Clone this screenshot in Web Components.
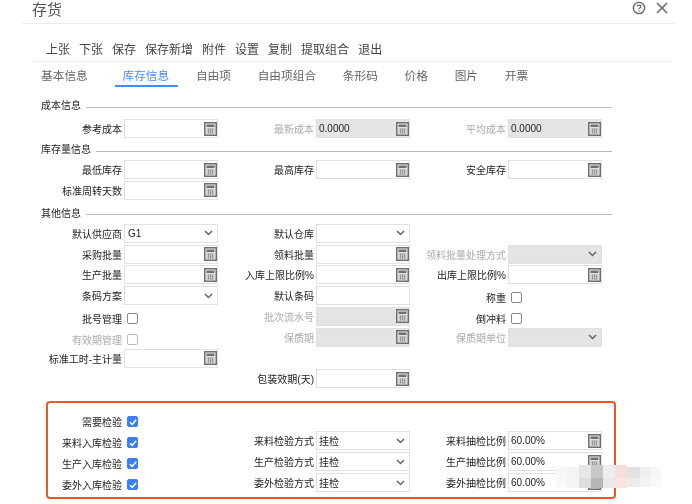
<!DOCTYPE html>
<html lang="zh">
<head>
<meta charset="utf-8">
<title>存货</title>
<style>
  html, body { margin: 0; padding: 0; background: #fff; }
  body { font-family: "Liberation Sans", "Noto Sans CJK SC", sans-serif; color: #333; }
</style>
</head>
<body>
<stock-dialog>
  <dialog-header slot="header" title="存货"></dialog-header>
  <tool-bar slot="toolbar" items="上张,下张,保存,保存新增,附件,设置,复制,提取组合,退出"></tool-bar>
  <tab-bar slot="tabs" items="基本信息,库存信息,自由项,自由项组合,条形码,价格,图片,开票" active="1"></tab-bar>

  <form-section heading="成本信息" style="--top:12px;--gap:6px">
    <form-row>
      <form-field label="参考成本" type="calc"></form-field>
      <form-field label="最新成本" type="calc" value="0.0000" disabled></form-field>
      <form-field label="平均成本" type="calc" value="0.0000" disabled></form-field>
    </form-row>
  </form-section>
  <form-section heading="库存量信息" style="--top:5px;--gap:3px">
    <form-row>
      <form-field label="最低库存" type="calc"></form-field>
      <form-field label="最高库存" type="calc"></form-field>
      <form-field label="安全库存" type="calc"></form-field>
    </form-row>
    <form-row>
      <form-field label="标准周转天数" type="calc"></form-field>
    </form-row>
  </form-section>
  <form-section heading="其他信息" style="--top:7px;--gap:3px">
    <form-row>
      <form-field label="默认供应商" type="select" value="G1"></form-field>
      <form-field label="默认仓库" type="select"></form-field>
    </form-row>
    <form-row>
      <form-field label="采购批量" type="calc"></form-field>
      <form-field label="领料批量" type="calc"></form-field>
      <form-field label="领料批量处理方式" type="select" disabled></form-field>
    </form-row>
    <form-row>
      <form-field label="生产批量" type="calc"></form-field>
      <form-field label="入库上限比例%" type="calc"></form-field>
      <form-field label="出库上限比例%" type="calc"></form-field>
    </form-row>
    <form-row>
      <form-field label="条码方案" type="select"></form-field>
      <form-field label="默认条码" type="text"></form-field>
      <form-field label="称重" type="check"></form-field>
    </form-row>
    <form-row>
      <form-field label="批号管理" type="check"></form-field>
      <form-field label="批次流水号" type="calc" disabled></form-field>
      <form-field label="倒冲料" type="check"></form-field>
    </form-row>
    <form-row>
      <form-field label="有效期管理" type="check" disabled></form-field>
      <form-field label="保质期" type="calc" disabled></form-field>
      <form-field label="保质期单位" type="select" disabled></form-field>
    </form-row>
    <form-row>
      <form-field label="标准工时-主计量" type="calc"></form-field>
    </form-row>
    <form-row>
      <form-field></form-field>
      <form-field label="包装效期(天)" type="calc"></form-field>
    </form-row>
  </form-section>

  <inspect-box>
    <form-row>
      <form-field label="需要检验" type="check" checked></form-field>
    </form-row>
    <form-row>
      <form-field label="来料入库检验" type="check" checked></form-field>
      <form-field label="来料检验方式" type="select" value="挂检"></form-field>
      <form-field label="来料抽检比例" type="calc" value="60.00%"></form-field>
    </form-row>
    <form-row>
      <form-field label="生产入库检验" type="check" checked></form-field>
      <form-field label="生产检验方式" type="select" value="挂检"></form-field>
      <form-field label="生产抽检比例" type="calc" value="60.00%"></form-field>
    </form-row>
    <form-row>
      <form-field label="委外入库检验" type="check" checked></form-field>
      <form-field label="委外检验方式" type="select" value="挂检"></form-field>
      <form-field label="委外抽检比例" type="calc" value="60.00%"></form-field>
    </form-row>
  </inspect-box>
  <mosaic-patch></mosaic-patch>
</stock-dialog>

<script>
const calcIcon = `
  <svg class="icon" width="13" height="14" viewBox="0 0 13 14">
    <rect x="0.75" y="0.75" width="11.5" height="12.5" fill="#f1f1f1" stroke="#6f6f6f" stroke-width="1.5"/>
    <rect x="2.5" y="2.5" width="8" height="2.6" fill="#6f6f6f"/>
    <path d="M2.5 7h8M2.5 9h8M2.5 11h8M4.5 6.5v5M6.5 6.5v5M8.5 6.5v5" stroke="#8a8a8a" stroke-width="0.8" fill="none"/>
  </svg>`;
const chevronIcon = `
  <svg class="icon" width="9" height="6" viewBox="0 0 9 6">
    <path d="M1 1l3.5 3.5L8 1" stroke="#666" stroke-width="1.5" fill="none"/>
  </svg>`;

class StockDialog extends HTMLElement {
  constructor() {
    super();
    this.attachShadow({ mode: 'open' });
    this.shadowRoot.innerHTML = `
      <style>
        :host { display: block; position: relative; width: 692px; height: 504px; overflow: hidden; background: #fff; filter: blur(0.45px); }
      </style>
      <slot name="header"></slot>
      <slot name="toolbar"></slot>
      <slot name="tabs"></slot>
      <slot></slot>
    `;
  }
}

class DialogHeader extends HTMLElement {
  constructor() {
    super();
    this.attachShadow({ mode: 'open' });
    this.shadowRoot.innerHTML = `
      <style>
        :host { display: flex; align-items: center; justify-content: space-between; height: 23px; margin: 0 17px 0 22px; padding: 0 7px 0 10px; box-sizing: content-box; border-bottom: 1px solid #ececec; }
        .title { font-size: 15px; color: #555; margin-top: -6px; }
        .tools { display: flex; gap: 10px; align-items: center; margin-top: -7px; }
      </style>
      <span class="title">${this.getAttribute('title')}</span>
      <span class="tools">
        <svg width="14" height="14" viewBox="0 0 14 14">
          <circle cx="7" cy="7" r="5.6" fill="none" stroke="#666" stroke-width="1.4"/>
          <path d="M5 5.6C5 3.6 9 3.6 9 5.4 9 6.6 7.2 6.8 7 8.2" fill="none" stroke="#666" stroke-width="1.2"/>
          <circle cx="7" cy="10" r="0.8" fill="#666"/>
        </svg>
        <svg width="12" height="12" viewBox="0 0 12 12">
          <path d="M1 1l10 10M11 1L1 11" stroke="#666" stroke-width="1.5" fill="none"/>
        </svg>
      </span>
    `;
  }
}

class ToolBar extends HTMLElement {
  constructor() {
    super();
    this.attachShadow({ mode: 'open' });
    const items = this.getAttribute('items').split(',');
    this.shadowRoot.innerHTML = `
      <style>
        :host { display: flex; gap: 9px; margin: 0 22px 0 32px; padding: 19px 0 4px 14px; height: 14px; line-height: 14px; font-size: 12px; color: #444; border-bottom: 1px solid #eee; }
      </style>
      ${items.map(t => `<span>${t}</span>`).join('')}
    `;
  }
}

class TabBar extends HTMLElement {
  constructor() {
    super();
    this.attachShadow({ mode: 'open' });
    const items = this.getAttribute('items').split(',');
    const active = Number(this.getAttribute('active'));
    this.shadowRoot.innerHTML = `
      <style>
        :host { display: flex; gap: 26.7px; padding-left: 41px; height: 25px; font-size: 11.7px; color: #666; }
        span { display: block; height: 23px; line-height: 28px; box-sizing: content-box; }
        .active { color: #4a8af4; margin: 0 -9px 0 1px; padding: 0 9px 0 7px; border-bottom: 2px solid #4a8af4; }
      </style>
      ${items.map((t, i) => `<span class="${i === active ? 'active' : ''}">${t}</span>`).join('')}
    `;
  }
}

class FormSection extends HTMLElement {
  constructor() {
    super();
    this.attachShadow({ mode: 'open' });
    this.shadowRoot.innerHTML = `
      <style>
        :host { display: block; margin: var(--top, 0) 80px 0 41px; font-size: 10px; }
        .head { display: flex; align-items: center; gap: 5px; height: 14px; line-height: 14px; color: #222; }
        .head i { flex: 1; height: 1px; background: #bbb; margin-top: 2px; }
        .rows { display: flex; flex-direction: column; gap: 1.8px; margin: var(--gap, 5px) 0 0 -41px; }
      </style>
      <div class="head"><span>${this.getAttribute('heading')}</span><i></i></div>
      <div class="rows"><slot></slot></div>
    `;
  }
}

class FormRow extends HTMLElement {
  constructor() {
    super();
    this.attachShadow({ mode: 'open' });
    this.shadowRoot.innerHTML = `
      <style>
        :host { display: grid; grid-template-columns: 218px 192px 192px; height: 19px; }
      </style>
      <slot></slot>
    `;
  }
}

class FormField extends HTMLElement {
  constructor() {
    super();
    this.attachShadow({ mode: 'open' });
    const label = this.getAttribute('label');
    if (!label) return;
    const type = this.getAttribute('type');
    const value = this.getAttribute('value') || '';
    const disabled = this.hasAttribute('disabled');
    let control = '';
    if (type === 'check') {
      const checked = this.hasAttribute('checked');
      control = `<span class="check ${checked ? 'on' : ''}">${checked ? `
        <svg width="10" height="10" viewBox="0 0 10 10"><path d="M2 5.2l2.2 2.2L8.2 2.8" stroke="#fff" stroke-width="1.6" fill="none"/></svg>` : ''}</span>`;
    } else {
      const icon = type === 'calc' ? calcIcon : type === 'select' ? chevronIcon : '';
      control = `<span class="box ${type}"><span class="value">${value}</span>${icon}</span>`;
    }
    this.shadowRoot.innerHTML = `
      <style>
        :host { display: flex; align-items: center; font-size: 10px; color: ${disabled ? '#aaa' : '#222'}; }
        :host([type=check]) { padding-top: 4px; }
        label { flex: 1; text-align: right; padding-right: 2px; white-space: nowrap; }
        .box { display: flex; align-items: center; justify-content: space-between; flex: 0 0 94px; box-sizing: border-box; height: 19px; padding: 0 0 0 2px; border: 1px solid #e0e0e0; background: ${disabled ? '#e4e4e4' : '#fff'}; color: #222; }
        :host(:first-child) .box { padding-left: 3px; }
        .box.select { padding-right: 4px; }
        .value { white-space: nowrap; }
        .icon { flex: none; }
        .check { display: block; margin: 0 80px 0 3px; width: 11px; height: 11px; box-sizing: border-box; border: 1px solid ${disabled ? '#bbb' : '#888'}; border-radius: 2px; }
        .check.on { background: #3a7ff5; border-color: #3a7ff5; }
        .check svg { display: block; margin: -0.5px; }
      </style>
      <label>${label}</label>${control}
    `;
  }
}

class InspectBox extends HTMLElement {
  constructor() {
    super();
    this.attachShadow({ mode: 'open' });
    this.shadowRoot.innerHTML = `
      <style>
        :host { display: flex; flex-direction: column; gap: 2px; box-sizing: border-box; width: 570px; height: 98px; margin: 13px 0 0 46px; padding: 7px 0 0; border: 2px solid #f0562e; border-radius: 4px; }
        ::slotted(form-row) { margin-left: -48px; }
      </style>
      <slot></slot>
    `;
  }
}

class MosaicPatch extends HTMLElement {
  constructor() {
    super();
    this.attachShadow({ mode: 'open' });
    const tiles = [
      [556,467,11,11,'#f8f8f8'], [556,478,11,9,'#f9f9f9'],
      [567,467,12,11,'#f4f4f4'], [567,478,12,10,'#f4f4f4'],
      [579,465,12,13,'#e6e6e6'], [579,478,12,10,'#dedede'],
      [591,465,12,13,'#c8c8c8'], [591,478,12,10,'#b5b5b5'],
      [603,465,12,13,'#eeeeee'], [603,478,12,10,'#e8e8e8'],
      [615,465,12,13,'#f5dfd9'], [615,478,12,10,'#f8e5e0'],
      [627,467,13,11,'#e2e2e2'], [627,478,13,9,'#ececec'],
      [640,467,11,11,'#f0f0f0'], [640,478,11,9,'#f3f3f3'],
      [651,467,10,11,'#f6f6f6'], [651,478,10,9,'#f9f9f9']
    ];
    this.shadowRoot.innerHTML = `
      <style>
        :host { position: absolute; left: 0; top: 0; }
        i { position: absolute; display: block; }
      </style>
      ${tiles.map(([x, y, w, h, c]) => `<i style="left:${x}px;top:${y}px;width:${w}px;height:${h}px;background:${c}"></i>`).join('')}
    `;
  }
}

customElements.define('stock-dialog', StockDialog);
customElements.define('dialog-header', DialogHeader);
customElements.define('tool-bar', ToolBar);
customElements.define('tab-bar', TabBar);
customElements.define('form-section', FormSection);
customElements.define('form-row', FormRow);
customElements.define('form-field', FormField);
customElements.define('inspect-box', InspectBox);
customElements.define('mosaic-patch', MosaicPatch);
</script>
</body>
</html>
